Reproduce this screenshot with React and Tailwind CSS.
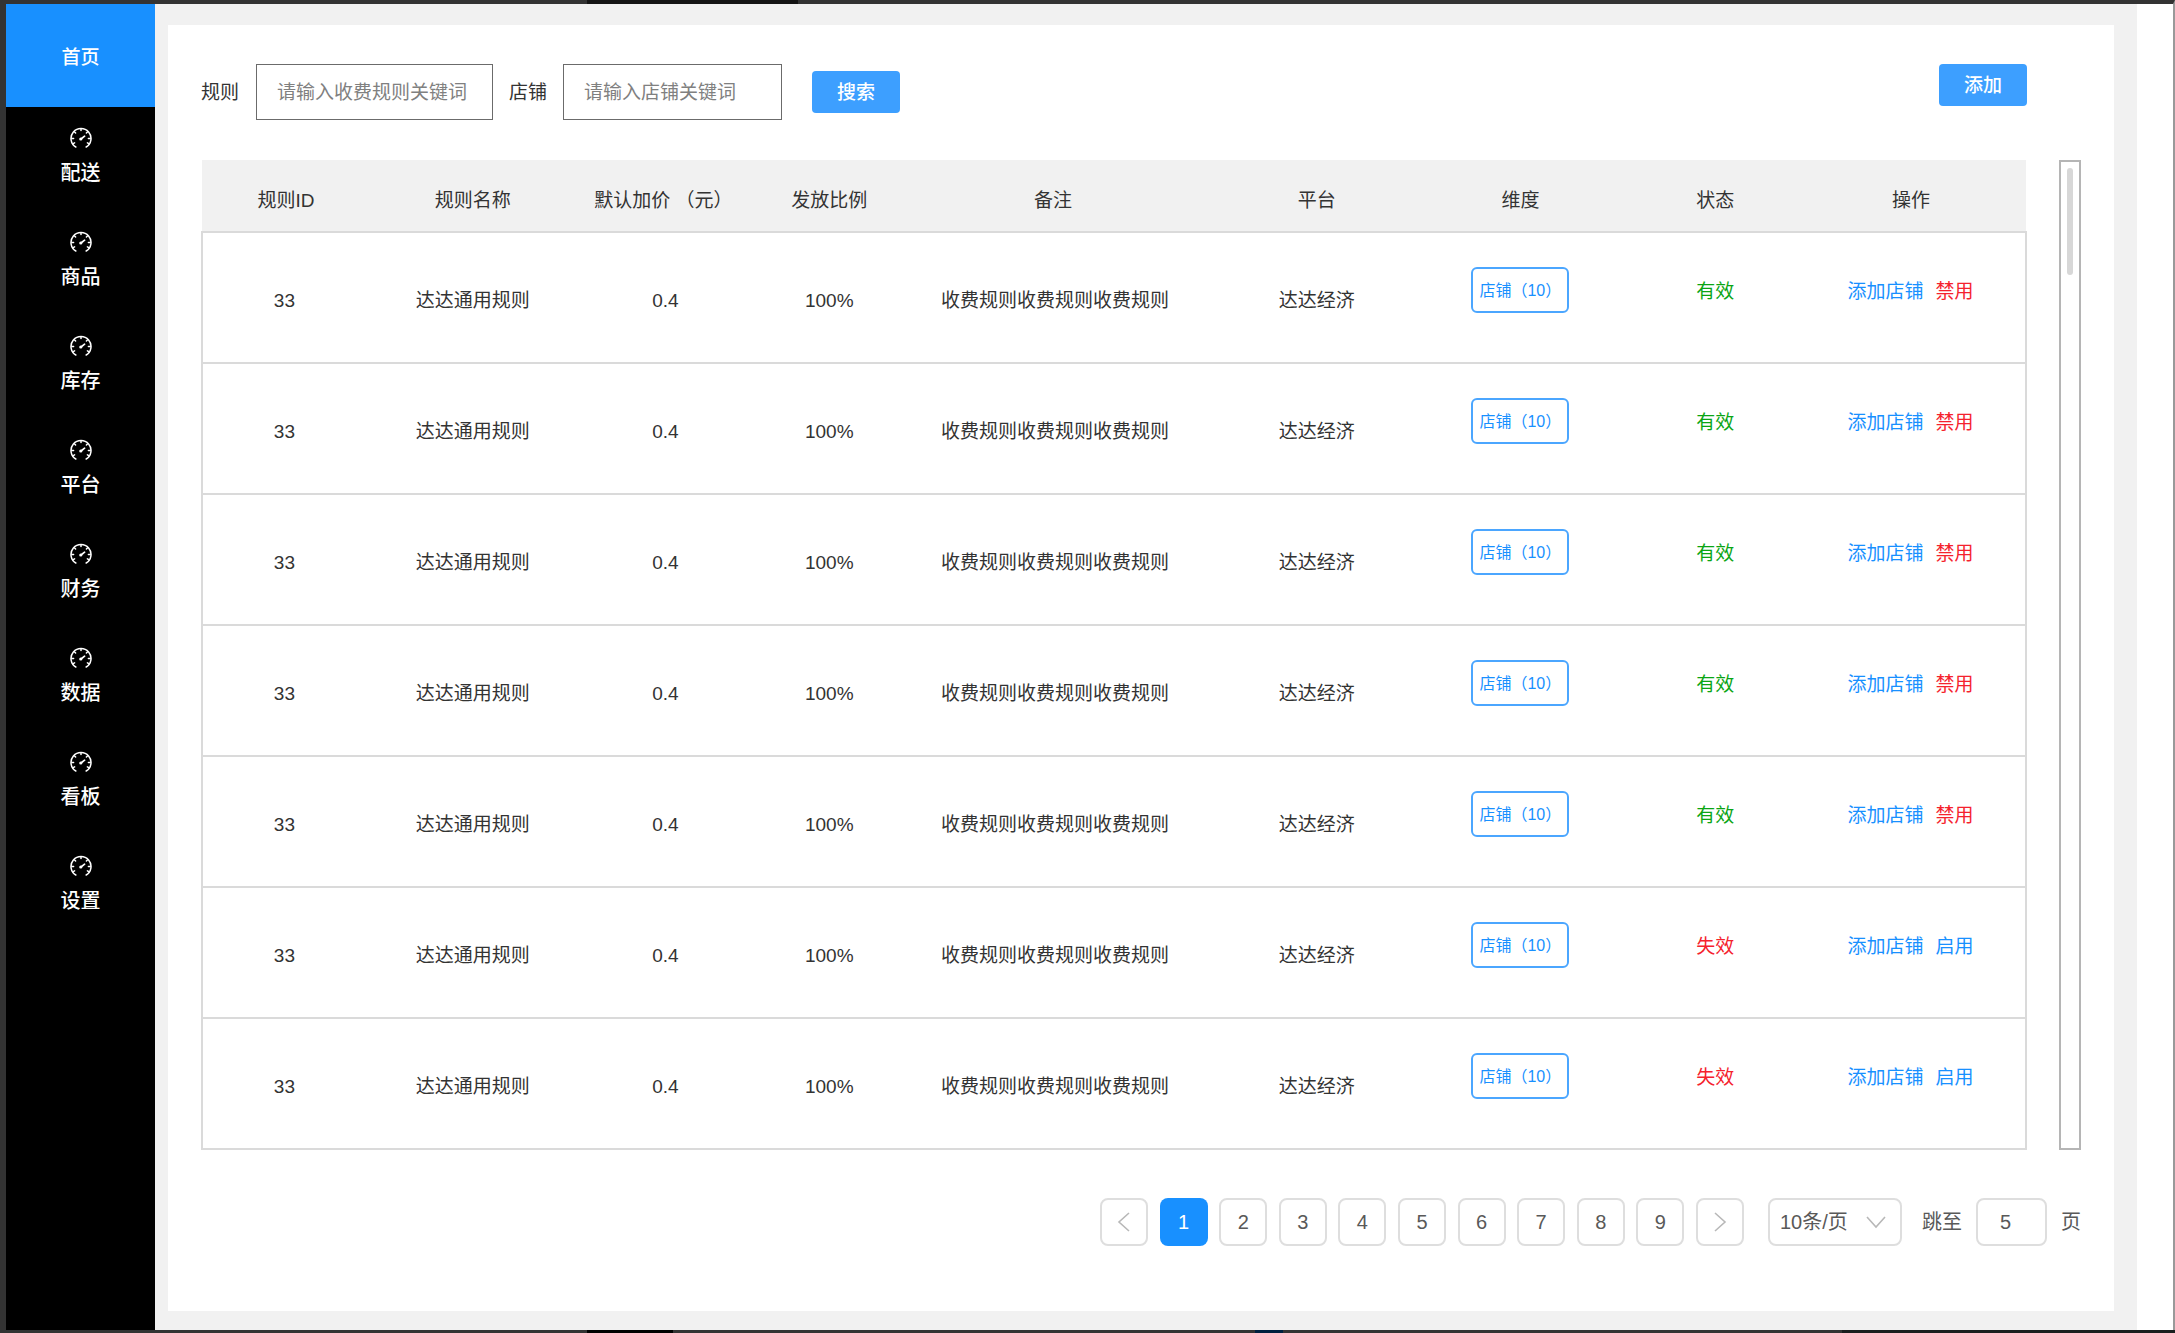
import React from "react";

const navItems = ["配送", "商品", "库存", "平台", "财务", "数据", "看板", "设置"];
const columns = [
  { title: "规则ID", width: 168 },
  { title: "规则名称", width: 206 },
  { title: "默认加价 （元）", width: 176 },
  { title: "发放比例", width: 156 },
  { title: "备注", width: 292 },
  { title: "平台", width: 236 },
  { title: "维度", width: 172 },
  { title: "状态", width: 218 },
  { title: "操作", width: 202 },
];
const rows = [true, true, true, true, true, false, false];
const pages = [1, 2, 3, 4, 5, 6, 7, 8, 9];

function Gauge() {
  return (
    <svg viewBox="0 0 22 22" className="size-[22px]" fill="none" stroke="currentColor" strokeWidth="1.5" strokeLinecap="round" aria-hidden="true">
      <path d="M5.8 20A10 10 0 1 1 16.2 20" />
      <path d="M11 2v1.6M4.6 5l1 1M17.4 5l-1 1M1.8 11.4h1.8M20.2 11.4h-1.8M3.2 16.6l1.4-.7M18.8 16.6l-1.4-.7" />
      <path d="M11 12l3.6-2.8" strokeWidth="1.7" />
      <circle cx="10.8" cy="12" r="1.6" fill="currentColor" stroke="none" />
    </svg>
  );
}

function Chevron({ d }) {
  return (
    <svg viewBox="0 0 20 20" className="size-5" fill="none" stroke="#b8b8b8" strokeWidth="1.6" aria-hidden="true">
      <path d={d} />
    </svg>
  );
}

function Sidebar() {
  return (
    <nav className="w-[149px] shrink-0 bg-black text-white">
      <a href="#home" className="flex h-[103px] items-center justify-center bg-[#1890ff] pt-1 text-[19px] font-medium">
        首页
      </a>
      {navItems.map((name) => (
        <a key={name} href={"#" + name} className="flex h-[104px] flex-col items-center gap-1 pt-5 text-xl font-medium">
          <Gauge />
          <span className="leading-10">{name}</span>
        </a>
      ))}
    </nav>
  );
}

function SearchBar() {
  return (
    <form className="flex items-start justify-between pr-[54px]" onSubmit={(e) => e.preventDefault()}>
      <div className="flex items-center">
        <label htmlFor="rule" className="pt-0.5">规则</label>
        <input id="rule" placeholder="请输入收费规则关键词" className="ml-[17px] h-14 w-[237px] border border-[#6b6b6b] px-5 pt-0.5 placeholder:text-[#808080]" />
        <label htmlFor="shop" className="ml-4 pt-0.5">店铺</label>
        <input id="shop" placeholder="请输入店铺关键词" className="ml-4 h-14 w-[219px] border border-[#6b6b6b] px-5 pt-0.5 placeholder:text-[#808080]" />
        <button type="submit" className="ml-[30px] h-[42px] w-[88px] rounded bg-[#3d9fff] pt-0.5 font-medium text-white">搜索</button>
      </div>
      <button type="button" className="h-[42px] w-[88px] rounded bg-[#3d9fff] pt-0.5 font-medium text-white">添加</button>
    </form>
  );
}

function RuleTable() {
  return (
    <table className="w-full flex-1 table-fixed border-collapse text-center">
      <colgroup>
        {columns.map((c) => (
          <col key={c.title} style={{ width: (c.width / 18.26).toFixed(3) + "%" }} />
        ))}
      </colgroup>
      <thead>
        <tr className="h-[72px] bg-[#f1f1f1]">
          {columns.map((c) => (
            <th key={c.title} className="whitespace-nowrap pt-2.5 font-normal last:pr-7">{c.title}</th>
          ))}
        </tr>
      </thead>
      <tbody>
        {rows.map((active, i) => (
          <tr key={i} className="h-[131px] border-2 border-[#dadada]">
            <td className="pt-1.5 pr-1">33</td>
            <td className="pt-1.5">达达通用规则</td>
            <td className="pt-1.5 pl-1">0.4</td>
            <td className="pt-1.5">100%</td>
            <td className="pt-1.5 pl-1">收费规则收费规则收费规则</td>
            <td className="pt-1.5">达达经济</td>
            <td className="pb-4">
              <button type="button" className="h-[46px] w-[98px] rounded-md border-2 border-[#4ba6ff] pt-0.5 pl-1.5 text-left text-base whitespace-nowrap text-[#1890ff]">
                店铺（10）
              </button>
            </td>
            <td className={active ? "pb-3 text-[#0aa514]" : "pb-3 text-[#f5222d]"}>{active ? "有效" : "失效"}</td>
            <td className="pr-7 pb-3">
              <div className="flex justify-center gap-3">
                <button type="button" className="text-[#1890ff]">添加店铺</button>
                <button type="button" className={active ? "text-[#f5222d]" : "text-[#1890ff]"}>{active ? "禁用" : "启用"}</button>
              </div>
            </td>
          </tr>
        ))}
      </tbody>
    </table>
  );
}

function Pagination() {
  return (
    <div className="mt-12 flex items-center justify-end text-xl text-[#595959]">
      <div className="flex w-[644px] justify-between">
        <button type="button" aria-label="上一页" className="flex size-12 items-center justify-center rounded-lg border-2 border-[#dedede]">
          <Chevron d="M15 1 5 10l10 9" />
        </button>
        {pages.map((n) => (
          <button
            key={n}
            type="button"
            className={n === 1 ? "size-12 rounded-lg bg-[#1890ff] text-white" : "size-12 rounded-lg border-2 border-[#dedede]"}
          >
            {n}
          </button>
        ))}
        <button type="button" aria-label="下一页" className="flex size-12 items-center justify-center rounded-lg border-2 border-[#dedede]">
          <Chevron d="M5 1 15 10 5 19" />
        </button>
      </div>
      <div className="relative ml-6">
        <select aria-label="每页条数" className="h-12 w-[134px] appearance-none rounded-lg border-2 border-[#dedede] pl-2.5">
          <option>10条/页</option>
        </select>
        <span className="pointer-events-none absolute top-3.5 right-4">
          <Chevron d="M1 5 10 15 19 5" />
        </span>
      </div>
      <label htmlFor="jump" className="ml-5">跳至</label>
      <input id="jump" defaultValue="5" className="mx-3.5 h-12 w-[71px] rounded-lg border-2 border-[#dedede] pr-3 text-center" />
      <span>页</span>
    </div>
  );
}

function FrameShades() {
  return (
    <div aria-hidden="true">
      <div className="absolute -top-1 left-[581px] h-1 w-[211px] bg-[#141414]" />
      <div className="absolute -bottom-[3px] left-[581px] h-[3px] w-[86px] bg-black" />
      <div className="absolute -bottom-[3px] left-[1249px] h-[3px] w-7 bg-[#00203f]" />
      <div className="absolute -right-0.5 -bottom-[3px] h-[3px] w-[333px] bg-[#1a1e1e]" />
    </div>
  );
}

export default function App() {
  return (
    <div className="relative flex min-h-screen border-t-4 border-r-2 border-b-[3px] border-l-[6px] border-[#333] border-r-[#999] bg-white pr-9 font-['Liberation_Sans','Noto_Sans_CJK_SC',sans-serif] text-[19px] leading-7 text-[#333]">
      <FrameShades />
      <Sidebar />
      <div className="flex min-w-0 flex-1 bg-[#f1f1f1] pt-[21px] pr-[23px] pb-[19px] pl-[13px]">
        <main className="flex-1 bg-white pt-[39px] pr-[33px] pl-[33px]">
          <SearchBar />
          <div className="mt-10 flex gap-8">
            <RuleTable />
            <div className="w-[22px] shrink-0 border-2 border-[#b5b5b5] pt-1.5">
              <div className="mx-auto h-[107px] w-1.5 rounded-full bg-[#d7d7d7]" />
            </div>
          </div>
          <Pagination />
        </main>
      </div>
    </div>
  );
}
